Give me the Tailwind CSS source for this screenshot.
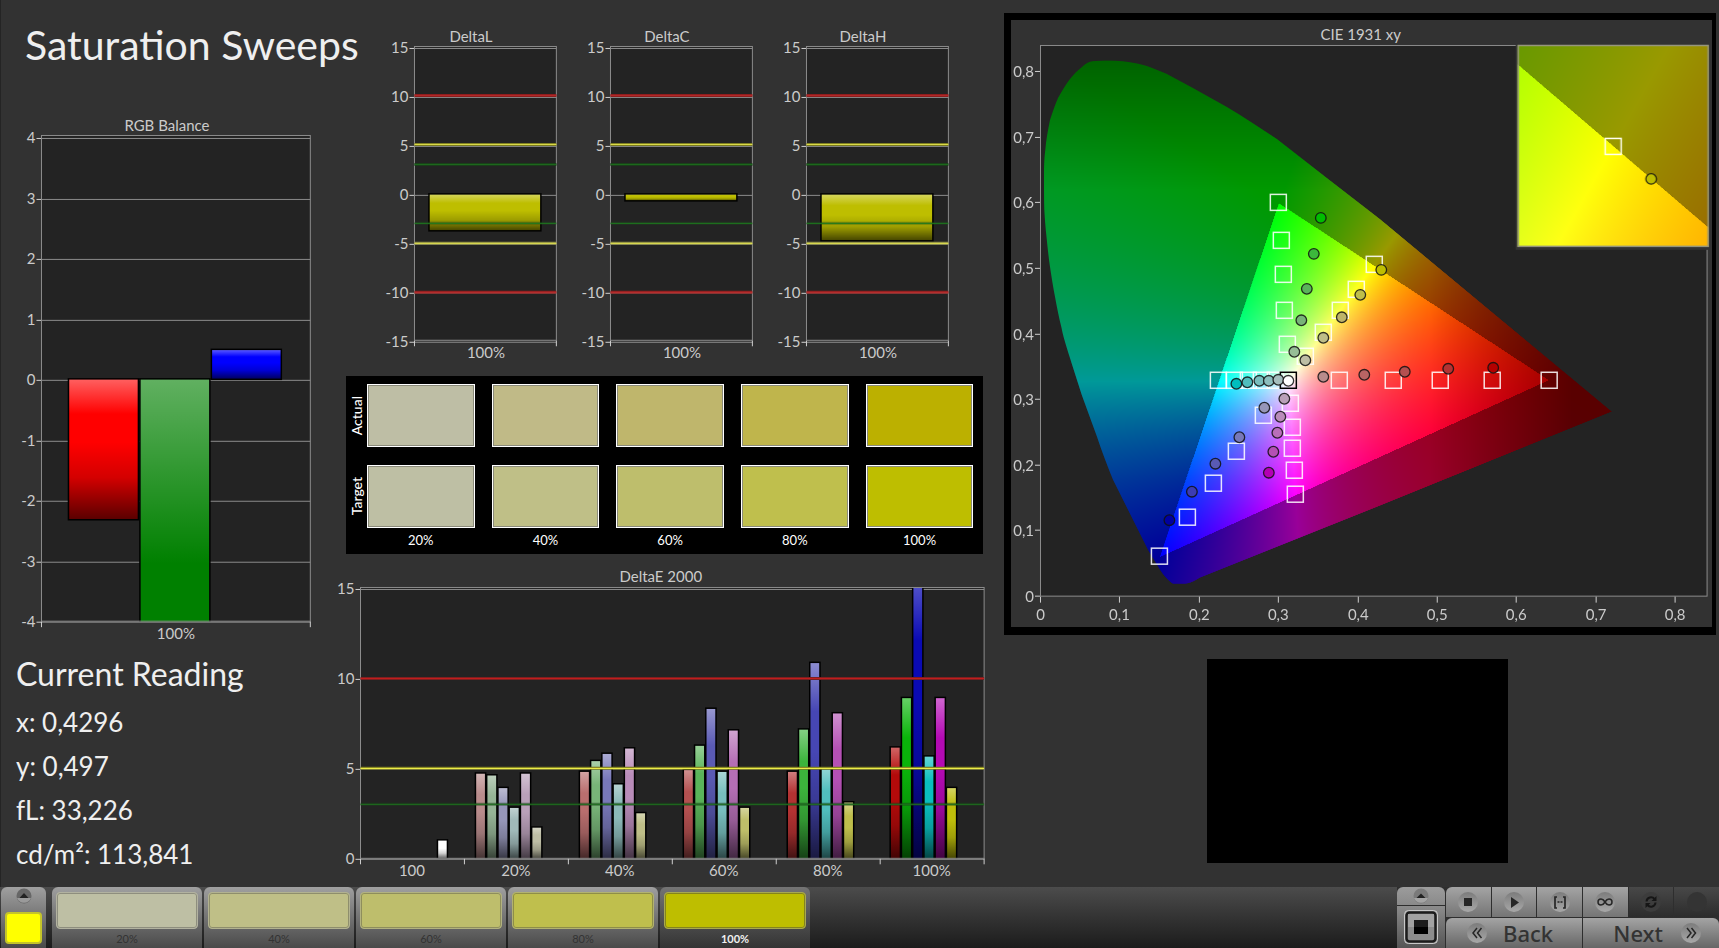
<!DOCTYPE html>
<html lang="en">
<head>
    <meta charset="UTF-8">
    <meta name="viewport" content="width=device-width, initial-scale=1.0">
    <title>Saturation Sweeps</title>
    <script src="https://cdn.jsdelivr.net/npm/@tailwindcss/browser@4"></script>
</head>
<body class="min-h-screen bg-[#323232] flex flex-col font-['Lato','Liberation_Sans',sans-serif] text-[#efefef] overflow-x-hidden">

    <!-- shared bar and button shading -->
    <svg width="0" height="0" class="absolute" aria-hidden="true">
        <defs>
            <linearGradient id="gloss" x1="0" y1="0" x2="0" y2="1">
                <stop offset="0" stop-color="#fff" stop-opacity="0.38"/>
                <stop offset="0.25" stop-color="#fff" stop-opacity="0"/>
                <stop offset="0.45" stop-color="#000" stop-opacity="0"/>
                <stop offset="0.7" stop-color="#000" stop-opacity="0.17"/>
                <stop offset="1" stop-color="#000" stop-opacity="0.65"/>
            </linearGradient>
            <linearGradient id="knob" x1="0" y1="0" x2="0" y2="1">
                <stop offset="0" stop-color="#7c7c7c"/>
                <stop offset="1" stop-color="#a8a8a8"/>
            </linearGradient>
        </defs>
    </svg>

    <main class="flex-1 grid grid-cols-[minmax(0,345fr)_minmax(0,659fr)_minmax(0,715fr)] items-start border-l border-[#242424]">

        <!-- left column -->
        <section class="flex flex-col">
            <h1 class="pt-[18px] pl-[24px] h-[110px] text-[41px] leading-[54px] whitespace-nowrap">Saturation Sweeps</h1>
            <svg id="rgbChart" viewBox="0 110 345 540" class="w-full h-auto"></svg>
            <div class="pl-[15px] pt-[2px] whitespace-nowrap">
                <h2 class="text-[32px] leading-[44px] mb-[4px]">Current Reading</h2>
                <p class="text-[26px] leading-[44px]">x: 0,4296</p>
                <p class="text-[26px] leading-[44px]">y: 0,497</p>
                <p class="text-[26px] leading-[44px]">fL: 33,226</p>
                <p class="text-[26px] leading-[44px]">cd/m²: 113,841</p>
            </div>
        </section>

        <!-- middle column -->
        <section class="flex flex-col">
            <div class="grid grid-cols-3 pl-[26px] pr-[45px] pt-[20px] h-[376px]">
                <svg id="deltaL" viewBox="0 20 196 350" class="w-full h-auto"></svg>
                <svg id="deltaC" viewBox="0 20 196 350" class="w-full h-auto"></svg>
                <svg id="deltaH" viewBox="0 20 196 350" class="w-full h-auto"></svg>
            </div>

            <div class="bg-black mr-[21px] h-[178px] pt-[8px] pr-[10px] grid grid-cols-[21px_1fr] grid-rows-[81px_65px_20px] text-white">
                <div class="h-[63px] flex items-center justify-center text-[14px] font-medium">
                    <span class="[writing-mode:vertical-rl] rotate-180">Actual</span>
                </div>
                <div class="h-[63px] grid grid-cols-5 gap-[17px]">
                    <div class="bg-[#bebea5] border border-white outline outline-[#8a8a7a] -outline-offset-2"></div>
                    <div class="bg-[#c0ba87] border border-white outline outline-[#8a8a7a] -outline-offset-2"></div>
                    <div class="bg-[#bfb66c] border border-white outline outline-[#8a8a7a] -outline-offset-2"></div>
                    <div class="bg-[#bfb54c] border border-white outline outline-[#8a8a7a] -outline-offset-2"></div>
                    <div class="bg-[#bcb000] border border-white outline outline-[#8a8a7a] -outline-offset-2"></div>
                </div>
                <div class="h-[63px] flex items-center justify-center text-[14px] font-medium">
                    <span class="[writing-mode:vertical-rl] rotate-180">Target</span>
                </div>
                <div class="h-[63px] grid grid-cols-5 gap-[17px]">
                    <div class="bg-[#bebfa4] border border-white outline outline-[#8a8a7a] -outline-offset-2"></div>
                    <div class="bg-[#bfbf87] border border-white outline outline-[#8a8a7a] -outline-offset-2"></div>
                    <div class="bg-[#bebe6c] border border-white outline outline-[#8a8a7a] -outline-offset-2"></div>
                    <div class="bg-[#bfbf4d] border border-white outline outline-[#8a8a7a] -outline-offset-2"></div>
                    <div class="bg-[#bebe00] border border-white outline outline-[#8a8a7a] -outline-offset-2"></div>
                </div>
                <div></div>
                <div class="grid grid-cols-5 gap-[17px] text-center text-[13px] leading-[20px]">
                    <span>20%</span><span>40%</span><span>60%</span><span>80%</span><span>100%</span>
                </div>
            </div>

            <svg id="deltaE" viewBox="345 554 659 333" class="w-full h-auto overflow-visible"></svg>
        </section>

        <!-- right column -->
        <section class="pt-[13px] pr-[3px] flex flex-col">
            <div class="border-black border-l-[7px] border-t-[7px] border-b-[8px] border-r-[4px]">
                <svg id="cie" viewBox="1011 20 701 607" class="w-full h-auto"></svg>
            </div>
            <div class="pr-[5px] pt-[24px]">
                <div class="mx-auto w-[301px] h-[204px] bg-black"></div>
            </div>
        </section>
    </main>

    <footer class="h-[61px] flex bg-linear-to-b from-[#4c4c4c] to-[#1c1c1c] text-[#333]">
        <button aria-label="Expand current colour" class="ml-px mr-[6px] w-[45px] rounded-t-md flex flex-col items-center justify-between pt-px pb-[4px] bg-linear-to-b from-[#a0a0a0] to-[#4a4a4a]">
            <svg width="16" height="16" viewBox="0 0 16 16"><circle cx="8" cy="8" r="7.5" fill="#666"/><path d="M1 10a7.5 7.5 0 0 0 14 0" fill="#9a9a9a"/><path d="M3.5 10 8 5l4.5 5z" fill="#222"/></svg>
            <span class="w-[37px] h-[32px] rounded-sm bg-[#ffff00] border-2 border-[#c4c42a]"></span>
        </button>
        <nav class="flex gap-[2px]">
            <button class="w-[150px] rounded-t-md px-[4px] pt-[5px] flex flex-col bg-linear-to-b from-[#a0a0a0] to-[#4a4a4a]">
                <span class="w-full h-[37px] rounded-sm bg-[#bebfa4] border border-[#b2b2a0] inset-ring inset-ring-[#8e8e7e]"></span>
                <span class="w-full text-center text-[11px] leading-[19px]">20%</span>
            </button>
            <button class="w-[150px] rounded-t-md px-[4px] pt-[5px] flex flex-col bg-linear-to-b from-[#a0a0a0] to-[#4a4a4a]">
                <span class="w-full h-[37px] rounded-sm bg-[#bfbf87] border border-[#b2b290] inset-ring inset-ring-[#8e8e6c]"></span>
                <span class="w-full text-center text-[11px] leading-[19px]">40%</span>
            </button>
            <button class="w-[150px] rounded-t-md px-[4px] pt-[5px] flex flex-col bg-linear-to-b from-[#a0a0a0] to-[#4a4a4a]">
                <span class="w-full h-[37px] rounded-sm bg-[#bebe6c] border border-[#b2b280] inset-ring inset-ring-[#8e8e5c]"></span>
                <span class="w-full text-center text-[11px] leading-[19px]">60%</span>
            </button>
            <button class="w-[150px] rounded-t-md px-[4px] pt-[5px] flex flex-col bg-linear-to-b from-[#a0a0a0] to-[#4a4a4a]">
                <span class="w-full h-[37px] rounded-sm bg-[#bfbf4d] border border-[#b2b270] inset-ring inset-ring-[#8e8e48]"></span>
                <span class="w-full text-center text-[11px] leading-[19px]">80%</span>
            </button>
            <button aria-current="true" class="w-[150px] rounded-t-md px-[4px] pt-[5px] flex flex-col bg-linear-to-b from-[#747474] to-[#343434]">
                <span class="w-full h-[37px] rounded-sm bg-[#bebe00] border border-[#a8a850] inset-ring inset-ring-[#84841c]"></span>
                <span class="w-full text-center text-[11px] leading-[19px] font-bold text-[#f0f0f0]">100%</span>
            </button>
        </nav>

        <div class="ml-auto flex gap-px bg-[#2e2e2e]">
            <div class="w-[48px] flex flex-col gap-px">
                <button aria-label="Expand patch" class="h-[18px] rounded-t-md flex items-center justify-center bg-linear-to-b from-[#9c9c9c] to-[#8a8a8a]">
                    <svg width="16" height="16" viewBox="0 0 16 16"><circle cx="8" cy="8" r="7.5" fill="#7a7a7a"/><path d="M1 10a7.5 7.5 0 0 0 14 0" fill="#a4a4a4"/><path d="M3.5 10 8 5.5l4.5 4.5z" fill="#222"/></svg>
                </button>
                <button aria-label="Patch window" class="flex-1 flex items-center justify-center bg-linear-to-b from-[#8c8c8c] to-[#555]">
                    <svg width="34" height="34" viewBox="0 0 34 34"><rect x="0.5" y="0.5" width="33" height="33" rx="4" fill="#999" stroke="#c8c8c8"/><rect x="2.5" y="2.5" width="29" height="29" rx="3" fill="#8c8c8c" stroke="#1c1c1c" stroke-width="2.5"/><rect x="4" y="4" width="26" height="13" fill="#a2a2a2"/><rect x="10" y="10" width="14" height="14" fill="#000"/><rect x="10" y="10" width="14" height="7" fill="#1c1c1c"/></svg>
                </button>
            </div>
            <div class="w-[273px] grid grid-rows-[30px_30px] gap-px">
                <div class="grid grid-cols-6 gap-px">
                    <button aria-label="Stop" class="rounded-tl-md flex items-center justify-center bg-linear-to-b from-[#a4a4a4] to-[#757575]">
                        <svg width="20" height="20" viewBox="0 0 20 20"><circle cx="10" cy="10" r="10" fill="url(#knob)"/><path d="M6 6h8v8H6z" fill="#262626"/></svg>
                    </button>
                    <button aria-label="Play" class="flex items-center justify-center bg-linear-to-b from-[#a4a4a4] to-[#757575]">
                        <svg width="20" height="20" viewBox="0 0 20 20"><circle cx="10" cy="10" r="10" fill="url(#knob)"/><path d="M7 5v11l8-5.5z" fill="#262626"/></svg>
                    </button>
                    <button aria-label="Measure range" class="flex items-center justify-center bg-linear-to-b from-[#a4a4a4] to-[#757575]">
                        <svg width="20" height="20" viewBox="0 0 20 20"><circle cx="10" cy="10" r="10" fill="url(#knob)"/><path d="M7 5H5v11h2M13 5h2v11h-2M7.5 10H9M9.5 10h1M11 10h1.500" fill="none" stroke="#262626" stroke-width="1.7"/></svg>
                    </button>
                    <button aria-label="Measure continuously" class="flex items-center justify-center bg-linear-to-b from-[#a4a4a4] to-[#757575]">
                        <svg width="20" height="20" viewBox="0 0 20 20"><circle cx="10" cy="10" r="10" fill="url(#knob)"/><path d="M10 10C8.500 7.500 7 7 6 7a3 3 0 0 0 0 6c1 0 2.500-.5 4-3s3-3 4-3a3 3 0 0 1 0 6c-1 0-2.500-.5-4-3z" fill="none" stroke="#262626" stroke-width="1.5"/></svg>
                    </button>
                    <button aria-label="Repeat" disabled class="flex items-center justify-center bg-linear-to-b from-[#484848] to-[#2c2c2c]">
                        <svg width="20" height="20" viewBox="0 0 20 20"><circle cx="10" cy="10" r="10" fill="#3c3c3c"/><path d="M5.500 9.500a4.500 4.500 0 0 1 8-2.500M14.500 10.500a4.500 4.500 0 0 1-8 2.500" fill="none" stroke="#161616" stroke-width="2"/><path d="M15.500 4v5h-5zM4.500 16v-5h5z" fill="#161616"/></svg>
                    </button>
                    <button aria-label="Record" disabled class="flex items-center justify-center bg-linear-to-b from-[#484848] to-[#2c2c2c]">
                        <svg width="20" height="20" viewBox="0 0 20 20"><circle cx="10" cy="10" r="10" fill="#343434"/></svg>
                    </button>
                </div>
                <div class="grid grid-cols-2 gap-px font-['Noto_Sans','Open_Sans',sans-serif] text-[22px] leading-[30px] font-medium">
                    <button class="rounded-tl-md flex items-center gap-[16px] pl-[21px] bg-linear-to-b from-[#a4a4a4] to-[#666]">
                        <svg width="20" height="20" viewBox="0 0 20 20"><circle cx="10" cy="10" r="10" fill="url(#knob)"/><path d="M10 5l-4 5 4 5M14.500 5l-4 5 4 5" fill="none" stroke="#262626" stroke-width="1.5"/></svg>
                        Back
                    </button>
                    <button class="rounded-tr-md flex items-center justify-end gap-[18px] pr-[18px] bg-linear-to-b from-[#a4a4a4] to-[#666]">
                        Next
                        <svg width="20" height="20" viewBox="0 0 20 20"><circle cx="10" cy="10" r="10" fill="url(#knob)"/><path d="M6 5l4 5-4 5M10.500 5l4 5-4 5" fill="none" stroke="#262626" stroke-width="1.5"/></svg>
                    </button>
                </div>
            </div>
        </div>
    </footer>

    <script>
        const GRID = '#8c8c8c';
        const TICK = '#d0d0d0';

        function line(x1, y1, x2, y2, color, width = 1) {
            return `<line x1="${x1}" y1="${y1}" x2="${x2}" y2="${y2}" stroke="${color}" stroke-width="${width}"/>`;
        }

        function label(x, y, text, anchor = 'middle') {
            return `<text x="${x}" y="${y}" text-anchor="${anchor}" font-size="15" fill="#cbcbcb">${text}</text>`;
        }

        function bar(x, y, w, h, color) {
            return `<rect x="${x}" y="${y}" width="${w}" height="${h}" fill="${color}"/>` +
                `<rect x="${x}" y="${y}" width="${w}" height="${h}" fill="url(#gloss)" stroke="#000" stroke-width="1.5"/>`;
        }

        // frame, horizontal grid, left ticks with their labels
        function axes(o) {
            let s = `<rect x="${o.x0}" y="${o.y0}" width="${o.x1 - o.x0}" height="${o.y1 - o.y0}" fill="#232323"/>`;
            for (const v of o.values) {
                const y = Math.round(o.zero - v * o.unit) + 0.5;
                s += line(o.x0, y, o.x1, y, GRID) + line(o.x0 - 5, y, o.x0, y, TICK);
                s += label(o.x0 - 6, y + 5, v, 'end');
            }
            for (const x of o.ticks) s += line(x, o.y1, x, o.y1 + 6, TICK);
            return s;
        }

        function frame(o) {
            return `<rect x="${o.x0}" y="${o.y0}" width="${o.x1 - o.x0}" height="${o.y1 - o.y0}" fill="none" stroke="${GRID}"/>`;
        }

        function limit(o, y, color, glow, width = 3) {
            return line(o.x0, y, o.x1, y, glow, width) + line(o.x0, y, o.x1, y, color, 1);
        }

        // RGB balance
        const rgb = { x0: 40.5, x1: 309.5, y0: 135.5, y1: 621.5, zero: 380, unit: 60.5, values: [4, 3, 2, 1, 0, -1, -2, -3, -4], ticks: [40.5, 309.5] };
        document.getElementById('rgbChart').innerHTML =
            `<clipPath id="rgbClip"><rect x="40" y="136" width="270" height="486"/></clipPath>` +
            label(166, 131, 'RGB Balance') + axes(rgb) +
            `<g clip-path="url(#rgbClip)">` +
            bar(67.5, 379, 70, 141, '#ff0000') + bar(139, 379, 70, 740, '#008000') + bar(210.5, 349.5, 70, 30, '#0000ff') +
            `</g>` + frame(rgb) + label(175, 639, '100%');

        // DeltaL, DeltaC, DeltaH
        function deltaChart(id, title, height) {
            const o = { x0: 42.5, x1: 184.5, y0: 46.5, y1: 340.5, zero: 195, unit: 9.77, values: [15, 10, 5, 0, -5, -10, -15], ticks: [42.5, 184.5] };
            document.getElementById(id).innerHTML = label(99, 42, title) + axes(o) + frame(o) +
                bar(57, 194, 112, height, '#bebe00') +
                limit(o, 95.5, '#b42a2a', '#8c1e1e') + limit(o, 144.5, '#e6e650', '#78781e') +
                limit(o, 164.5, '#1e6e1e', '#1a3c1a') + limit(o, 223.5, '#1e781e', '#1e501e66') +
                limit(o, 243.5, '#e6e650', '#8c8c46') + limit(o, 292.5, '#be3232', '#8c1e1e') +
                label(114, 358, '100%');
        }
        deltaChart('deltaL', 'DeltaL', 37);
        deltaChart('deltaC', 'DeltaC', 7);
        deltaChart('deltaH', 'DeltaH', 47);

        // DeltaE 2000
        const de = { x0: 359.5, x1: 983.5, y0: 587.5, y1: 858.5, zero: 859, unit: 18, values: [15, 10, 5, 0], ticks: [359.5, 463.5, 567.5, 671.5, 775.5, 879.5, 983.5] };
        const groups = [
            { x: 474, v: [4.80, 4.70, 4.00, 2.90, 4.80, 1.80], c: ['#b98c8c', '#96b496', '#9696b9', '#a0b9b9', '#b9a0b9', '#bebea5'] },
            { x: 578, v: [4.90, 5.50, 5.90, 4.20, 6.20, 2.60], c: ['#b96e6e', '#78b478', '#7878b9', '#8cb9b9', '#b98cb9', '#bebe87'] },
            { x: 682, v: [5.00, 6.35, 8.40, 4.90, 7.20, 2.90], c: ['#b45050', '#5ab45a', '#5a5ab4', '#78bebe', '#b46eb4', '#bebe69'] },
            { x: 786, v: [4.90, 7.25, 10.95, 5.05, 8.15, 3.20], c: ['#b43232', '#3cb43c', '#4646b4', '#50bebe', '#b450b4', '#bebe4b'] },
            { x: 889, v: [6.25, 9.00, 16.2, 5.75, 9.00, 4.00], c: ['#b40a0a', '#0ab40a', '#0a0ab4', '#0abebe', '#b40ab4', '#bebe0a'] }
        ];
        let deBars = bar(436.5, 840, 10, 19, '#ffffff');
        for (const g of groups) {
            g.v.forEach((v, i) => deBars += bar(g.x + 0.5 + i * 11.25, 859.5 - v * 18, 10.25, v * 18, g.c[i]));
        }
        document.getElementById('deltaE').innerHTML =
            `<clipPath id="deClip"><rect x="360" y="588" width="624" height="271"/></clipPath>` +
            label(660, 582, 'DeltaE 2000') + axes(de) + `<g clip-path="url(#deClip)">${deBars}</g>` + frame(de) +
            limit(de, 678.5, '#c81e1e', '#782020') + limit(de, 768.5, '#ffff50', '#78781e') + limit(de, 804.5, '#1e6e1e', '#1a461a88') +
            ['100', '20%', '40%', '60%', '80%', '100%'].map((t, i) => label(411 + i * 104, 876, t)).join('');

        // CIE 1931 xy
        const X = x => 1040.7 + x * 794.5;
        const Y = y => 596.7 - y * 655.5;
        const locus = 'M1044 177C1044 168 1044 160 1045.3 150C1046 140 1048 130 1050 120C1053 111 1055 105 1058 98C1062 91 1066 84 1070 79C1074 74 1078 70 1082 67C1086 63 1090 61 1095 61C1102 60.5 1108 60.5 1115 60.7C1121 61 1127 61.5 1133 62.7C1138 63.5 1142 64.5 1147 66C1154 68.5 1160 71 1167 74L1193 88L1227 107C1244 117 1260 128 1277 139L1327 178L1380 219L1612 411.7L1380 506L1200 578C1195 581 1190 584 1185 584L1173 584C1171 583 1169 581 1167 579C1164 576 1162 573 1160 570C1156 563 1152 557 1148 550L1133 520L1113 480C1107 465 1102 452 1097 437L1081.7 395L1068.3 353C1065 342 1063 336 1061.5 328C1059 318 1057 308 1055 297C1053 287 1051.5 277 1050 267C1048.5 257 1047.5 247 1046.5 237C1045.5 228 1044.8 219 1044.3 210C1044 200 1044 188 1044 177Z';

        function chroma(x, y) {
            const bigX = x / y, bigZ = (1 - x - y) / y;
            const lin = [
                3.2406 * bigX - 1.5372 - 0.4986 * bigZ,
                -0.9689 * bigX + 1.8758 + 0.0415 * bigZ,
                0.0557 * bigX - 0.2040 + 1.0570 * bigZ
            ];
            const inside = Math.min(...lin) >= 0;
            const max = Math.max(...lin);
            let k = inside ? 1 : 0.6;
            // deep reds and greens fall off towards the locus
            if (x > 0.49) k *= 1 - 0.42 * Math.min(1, (x - 0.49) / 0.18);
            if (y > 0.62) k *= 1 - 0.36 * Math.min(1, (y - 0.62) / 0.2);
            return lin.map(c => 255 * k * Math.max(0, c) / max);
        }

        // fills a canvas at double density; toXY maps a css pixel to a chromaticity
        function paint(canvas, toXY) {
            const ctx = canvas.getContext('2d');
            const img = ctx.createImageData(canvas.width, canvas.height);
            for (let j = 0, p = 0; j < canvas.height; j++) {
                for (let i = 0; i < canvas.width; i++, p += 4) {
                    const [x, y] = toXY((i + 0.5) / 2, (j + 0.5) / 2);
                    const c = chroma(x, Math.max(y, 0.001));
                    img.data[p] = c[0];
                    img.data[p + 1] = c[1];
                    img.data[p + 2] = c[2];
                    img.data[p + 3] = 255;
                }
            }
            ctx.putImageData(img, 0, 0);
            return ctx;
        }

        // [x, y] of the target squares
        const targets = [
            [1278, 202], [1281, 240], [1283, 274], [1284, 310], [1287, 344],
            [1374, 264], [1356, 289], [1340, 310], [1323, 332], [1305, 356],
            [1218, 380], [1234, 380], [1248, 380], [1261, 380], [1275, 380],
            [1339, 380], [1393, 380], [1440, 380], [1492, 380], [1549, 380],
            [1290, 403], [1292, 427], [1292, 448], [1294, 470], [1295, 494],
            [1263, 415], [1236, 451], [1213, 483], [1187, 517], [1159, 556]
        ];
        // [x, y, colour] of the measured points
        const points = [
            [1321, 218, '#00be00'], [1314, 254, '#3cb83c'], [1307, 289, '#5ab45a'], [1301.5, 320.5, '#78b478'], [1294.5, 352, '#96be96'],
            [1381.5, 270, '#bebe00'], [1360.5, 295, '#bebe4b'], [1342, 317.5, '#beb469'], [1323.5, 338, '#bebe87'], [1305.5, 360.5, '#bebea5'],
            [1236.5, 384, '#00bebe'], [1247.5, 382.5, '#50bebe'], [1259.5, 381, '#78bebe'], [1269, 381, '#8cbebe'], [1278.5, 380, '#a5bebe'],
            [1323.5, 377, '#b98c8c'], [1364.5, 375, '#b96464'], [1405, 372, '#b45050'], [1448.5, 369, '#b43232'], [1493.5, 368, '#b40000'],
            [1284.5, 399, '#b9a0b9'], [1280.5, 417, '#b98cb9'], [1277.5, 433, '#b96eb9'], [1273.5, 452, '#b450b4'], [1269, 473, '#b400b4'],
            [1264.5, 408, '#9696b9'], [1239.5, 437.5, '#7878b9'], [1215.5, 464, '#5a5ab4'], [1192, 492, '#3c3cb4'], [1169.5, 520.5, '#0000a0']
        ];

        const square = (x, y, color) => `<rect x="${x - 7.5}" y="${y - 7.5}" width="16" height="16" fill="none" stroke="${color}" stroke-width="1.5"/>`;
        const dot = (x, y, color) => `<circle cx="${x}" cy="${y}" r="5.3" fill="${color}" stroke="#111" stroke-width="1.3" stroke-opacity="0.85"/>`;

        let cie = label(1361, 40, 'CIE 1931 xy') +
            `<rect x="1040.5" y="45.5" width="667" height="551" fill="#232323" stroke="${GRID}"/>` +
            `<foreignObject x="1041" y="46" width="667" height="550"><canvas id="gamut" width="1334" height="1100" class="block w-[667px] h-[550px]"></canvas></foreignObject>`;
        for (let i = 0; i <= 8; i++) {
            const text = i ? '0,' + i : '0';
            const x = Math.round(X(i / 10)) - 0.5, y = Math.round(Y(i / 10)) - 0.5;
            cie += line(x, 597, x, 603, TICK) + label(x, 620, text);
            cie += line(1035, y, 1040, y, TICK) + label(1034, y + 6, text, 'end');
        }
        cie += targets.map(t => square(t[0], t[1], '#ffffffdd')).join('') + square(1288, 380, '#000') +
            points.map(p => dot(...p)).join('') + dot(1288.5, 381, '#ffffff');
        // magnified view of the current patch
        cie += `<rect x="1516" y="44" width="194" height="206" fill="#323232"/>` +
            `<foreignObject x="1518" y="45" width="191" height="202"><canvas id="zoomed" width="382" height="404" class="block w-[191px] h-[202px]"></canvas></foreignObject>` +
            `<rect x="1518.5" y="45.5" width="190" height="201" fill="none" stroke="#96967d" stroke-width="1.5"/>` +
            square(1613, 146, '#fffff0') + dot(1651.5, 179, '#bebe00');
        document.getElementById('cie').innerHTML = cie;

        const ctx = paint(document.getElementById('gamut'), (i, j) => [(1041 + i - 1040.7) / 794.5, (596.7 - 46 - j) / 655.5]);
        ctx.globalCompositeOperation = 'destination-in';
        ctx.scale(2, 2);
        ctx.translate(-1041, -46);
        ctx.fill(new Path2D(locus));
        paint(document.getElementById('zoomed'), (i, j) => [0.4193 + (i - 95.5) / 3690, 0.5053 - (j - 101) / 3976]);
    </script>
</body>
</html>
